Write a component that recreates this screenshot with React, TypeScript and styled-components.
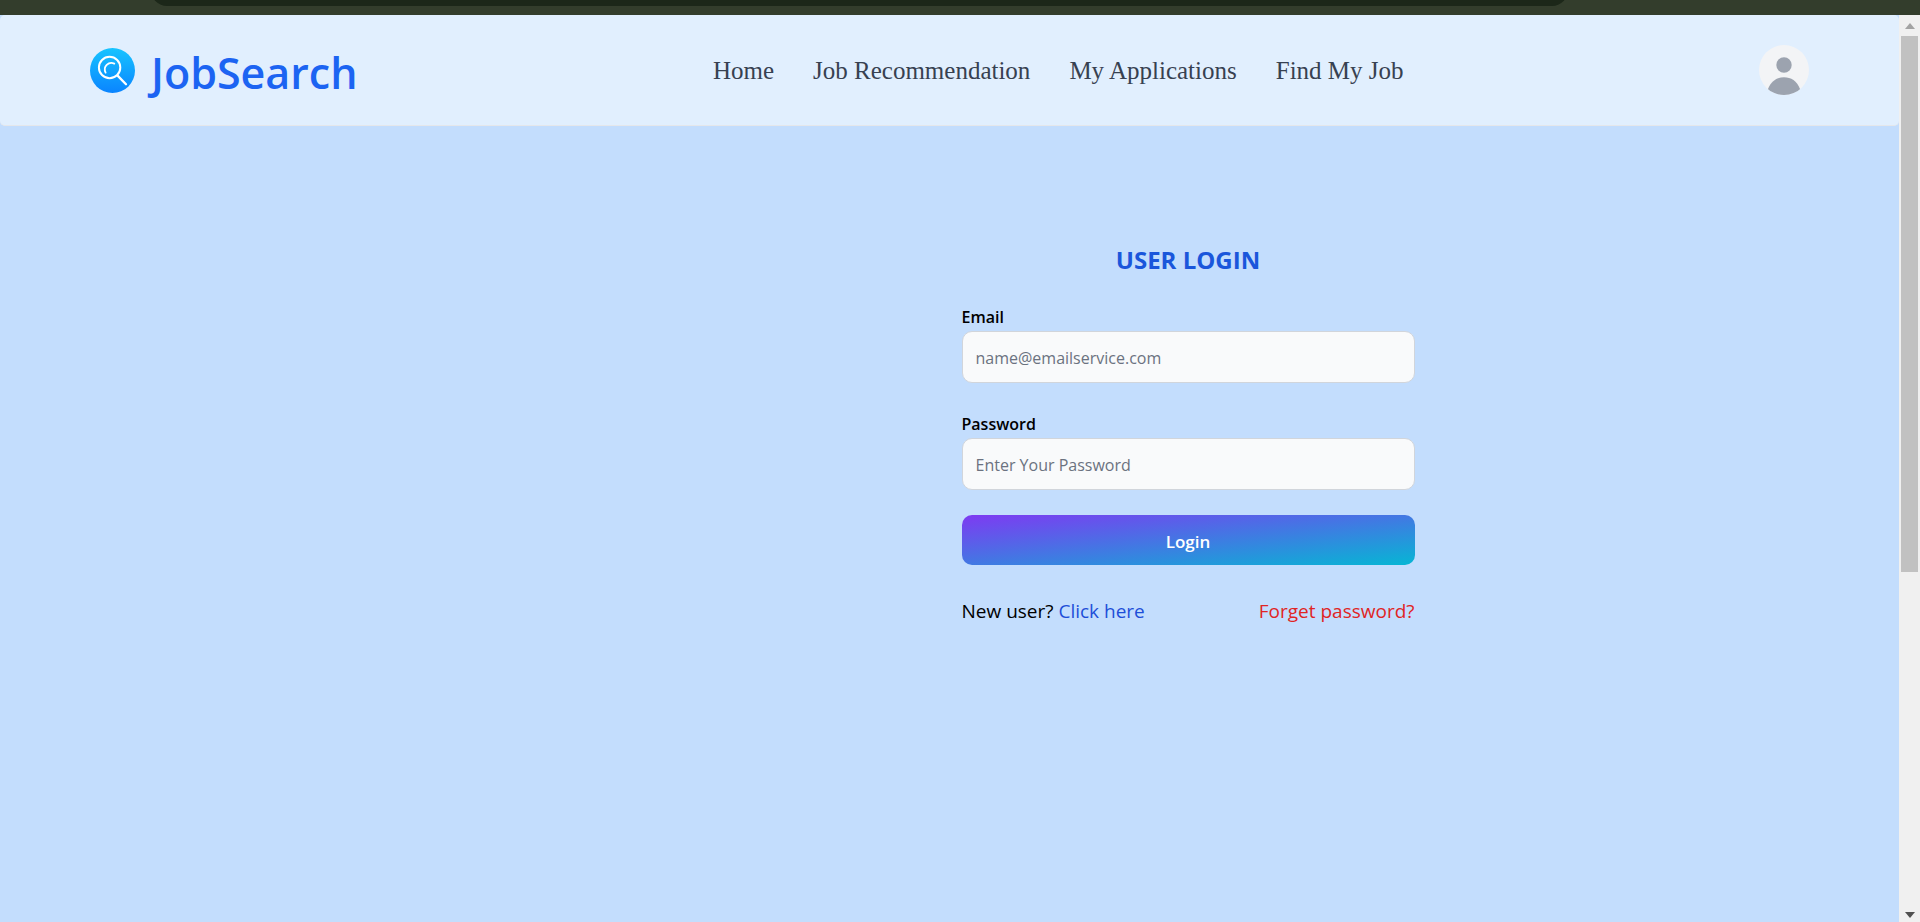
import React from "react";
import styled, { createGlobalStyle } from "styled-components";

const sans = `"Segoe UI", "Open Sans", "Noto Sans", sans-serif`;

const GlobalStyle = createGlobalStyle`
  *, *::before, *::after { box-sizing: border-box; }
  body {
    margin: 0;
    font-family: ${sans};
    background: #c3ddfd;
    color: #000;
  }
  a { text-decoration: none; }
  h1, p { margin: 0; }
`;

const Window = styled.div`
  display: flex;
  flex-direction: column;
  min-height: 100vh;
`;

const BrowserStrip = styled.div`
  display: flex;
  align-items: flex-end;
  height: 15px;
  padding: 0 352px 9px 151px;
  overflow: hidden;
  background: #333d2c;
`;

const AddressBar = styled.div`
  flex: 1;
  height: 32px;
  border-radius: 16px;
  background: #1c2719;
`;

const Viewport = styled.div`
  flex: 1;
  display: flex;
`;

const Page = styled.div`
  flex: 1;
  background: #c3ddfd;
`;

const Header = styled.header`
  display: flex;
  align-items: center;
  justify-content: space-between;
  height: 111px;
  padding: 0 90px;
  border: solid #e5e7eb;
  border-width: 0 0 1px;
  border-radius: 5px;
  background: #e1effe;
`;

const Brand = styled.a`
  display: flex;
  align-items: center;
  gap: 16px;
  color: #1c64f2;
  font-size: 43px;
  font-weight: 600;
  line-height: 56px;
`;

const BrandName = styled.span`
  padding-top: 6px;
`;

const Nav = styled.nav`
  display: flex;
  gap: 39px;
  padding-top: 2px;
`;

const NavLink = styled.a`
  color: #374151;
  font-family: Georgia, "Liberation Serif", serif;
  font-size: 25px;
  line-height: 30px;
`;

const AvatarButton = styled.button`
  width: 50px;
  height: 50px;
  padding: 0;
  border: 0;
  border-radius: 50%;
  overflow: hidden;
  background: #f3f4f6;
  cursor: pointer;

  svg { display: block; }
`;

const Main = styled.main`
  display: grid;
  grid-template-columns: 1fr 1fr;
  padding-top: 114px;
`;

const LoginForm = styled.form`
  grid-column: 2;
  display: flex;
  flex-direction: column;
  width: 100%;
  max-width: 465px;
  padding-left: 12px;
`;

const Title = styled.h1`
  margin-bottom: 25px;
  color: #1a56db;
  font-size: 24px;
  font-weight: 700;
  line-height: 40px;
  text-align: center;
`;

const Field = styled.div`
  display: flex;
  flex-direction: column;
  gap: 2px;
  margin-bottom: 29px;

  &:last-of-type { margin-bottom: 25px; }
`;

const Label = styled.label`
  font-size: 16px;
  font-weight: 600;
  line-height: 24px;
`;

const Input = styled.input`
  height: 52px;
  padding: 2px 13px 0;
  border: 1px solid #d1d5db;
  border-radius: 10px;
  background: #f9fafb;
  color: #111827;
  font-family: inherit;
  font-size: 16px;

  &::placeholder { color: #6b7280; opacity: 1; }
`;

const LoginButton = styled.button`
  height: 50px;
  padding: 2px 0 0;
  border: 0;
  border-radius: 10px;
  background: linear-gradient(to bottom right, #7e3af2, #06b6d4);
  color: #fff;
  font-family: inherit;
  font-size: 17px;
  font-weight: 600;
  cursor: pointer;
`;

const FormFooter = styled.footer`
  display: flex;
  justify-content: space-between;
  margin-top: 32px;
  font-size: 19px;
  line-height: 28px;
`;

const TextLink = styled.a<{ $tone: "blue" | "red" }>`
  color: ${({ $tone }) => ($tone === "red" ? "#e02424" : "#1d4ed8")};
`;

const ScrollBar = styled.div`
  display: flex;
  flex-direction: column;
  width: 21px;
  background: #f0f0f0;
`;

const ScrollArrow = styled.div<{ $end?: boolean }>`
  display: flex;
  align-items: ${({ $end }) => ($end ? "flex-end" : "center")};
  justify-content: center;
  height: 21px;
  padding-bottom: ${({ $end }) => ($end ? "4px" : "0")};
`;

const ScrollTrack = styled.div`
  flex: 1;
  padding: 0 2px;
  display: flex;
  flex-direction: column;
`;

const ScrollThumb = styled.div`
  flex: 0 0 62%;
  background: #c1c1c1;
`;

const Logo = () => (
  <svg width="45" height="45" viewBox="0 0 45 45" aria-hidden="true">
    <defs>
      <linearGradient id="logoFill" x1="0" y1="0" x2="0" y2="1">
        <stop offset="0" stopColor="#17c4ff" />
        <stop offset="1" stopColor="#0a84ff" />
      </linearGradient>
    </defs>
    <circle cx="22.5" cy="22.5" r="22.5" fill="url(#logoFill)" />
    <g fill="none" stroke="#fff" strokeLinecap="round">
      <circle cx="19.6" cy="19.5" r="10.7" strokeWidth="2" />
      <path d="M27.6 27.6 36 36.2" strokeWidth="2.3" />
      <path d="M24.3 15.6A6.6 6.6 0 0 0 15.6 24.6" strokeWidth="1.8" />
    </g>
  </svg>
);

const Person = () => (
  <svg width="50" height="50" viewBox="0 0 50 50" fill="#9ca3af" aria-hidden="true">
    <circle cx="25" cy="20" r="7.7" />
    <path d="M9 44C12 36 18 32.3 25 32.3S38 36 41 44V50H9Z" />
  </svg>
);

const navItems = ["Home", "Job Recommendation", "My Applications", "Find My Job"];

const fields = [
  { id: "email", label: "Email", type: "email", placeholder: "name@emailservice.com" },
  { id: "password", label: "Password", type: "password", placeholder: "Enter Your Password" },
];

export default function App() {
  return (
    <>
      <GlobalStyle />
      <Window>
        <BrowserStrip>
          <AddressBar />
        </BrowserStrip>
        <Viewport>
          <Page>
            <Header>
              <Brand href="#">
                <Logo />
                <BrandName>JobSearch</BrandName>
              </Brand>
              <Nav>
                {navItems.map((item) => (
                  <NavLink key={item} href="#">
                    {item}
                  </NavLink>
                ))}
              </Nav>
              <AvatarButton type="button" aria-label="Account">
                <Person />
              </AvatarButton>
            </Header>
            <Main>
              <LoginForm onSubmit={(event) => event.preventDefault()}>
                <Title>USER LOGIN</Title>
                {fields.map(({ id, label, type, placeholder }) => (
                  <Field key={id}>
                    <Label htmlFor={id}>{label}</Label>
                    <Input id={id} type={type} placeholder={placeholder} />
                  </Field>
                ))}
                <LoginButton type="submit">Login</LoginButton>
                <FormFooter>
                  <p>
                    New user?{" "}
                    <TextLink href="#" $tone="blue">
                      Click here
                    </TextLink>
                  </p>
                  <TextLink href="#" $tone="red">
                    Forget password?
                  </TextLink>
                </FormFooter>
              </LoginForm>
            </Main>
          </Page>
          <ScrollBar aria-hidden="true">
            <ScrollArrow>
              <svg width="10" height="6" viewBox="0 0 10 6" fill="#a3a3a3">
                <path d="M0 6 5 0l5 6Z" />
              </svg>
            </ScrollArrow>
            <ScrollTrack>
              <ScrollThumb />
            </ScrollTrack>
            <ScrollArrow $end>
              <svg width="10" height="6" viewBox="0 0 10 6" fill="#505050">
                <path d="M0 0 5 6l5-6Z" />
              </svg>
            </ScrollArrow>
          </ScrollBar>
        </Viewport>
      </Window>
    </>
  );
}
